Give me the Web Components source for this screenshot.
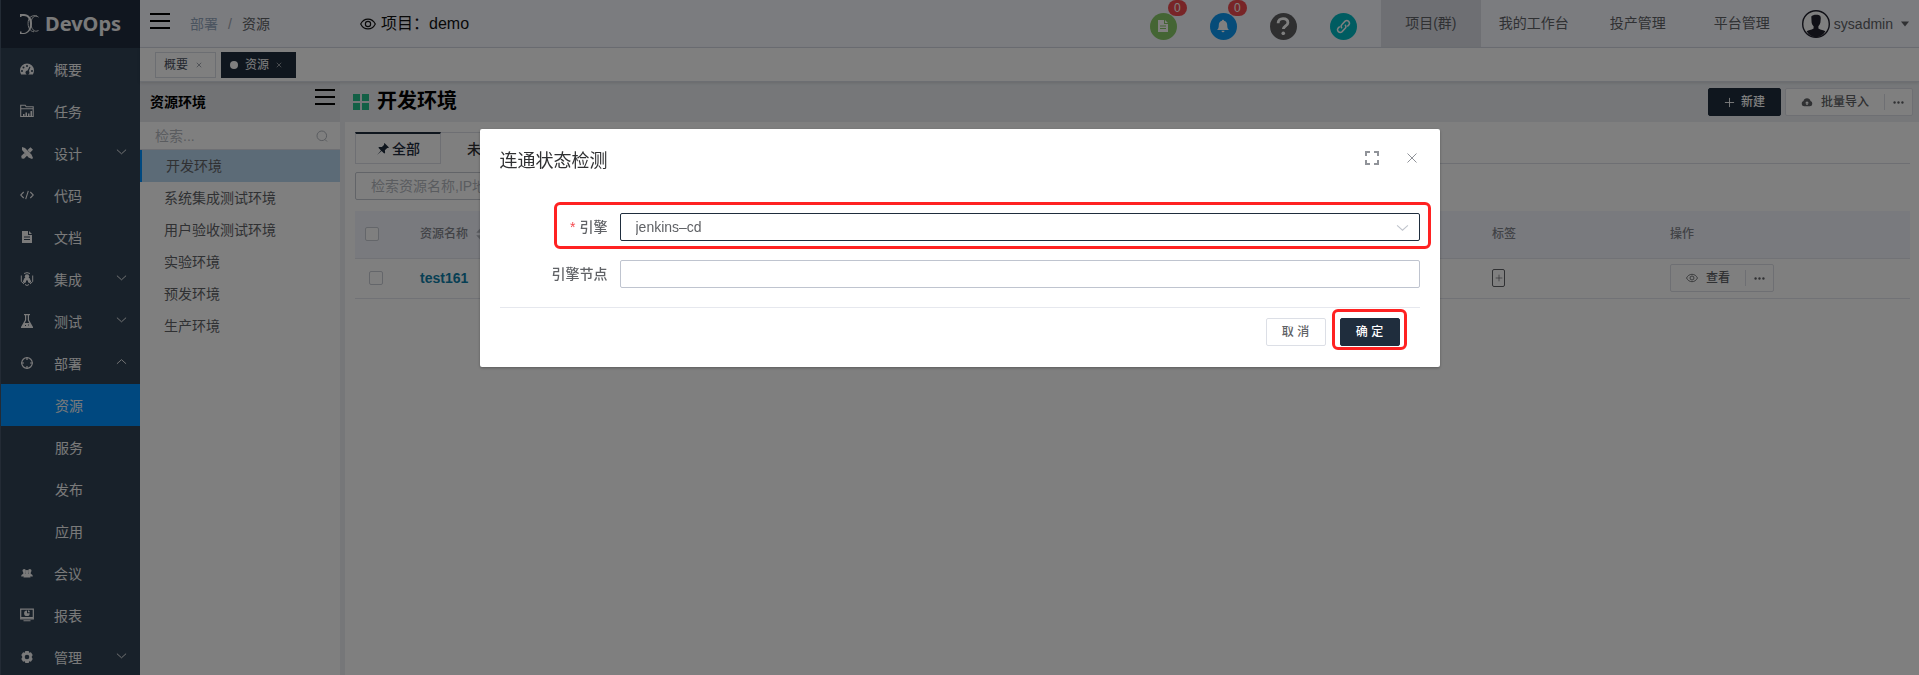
<!DOCTYPE html>
<html lang="zh-CN">
<head>
<meta charset="utf-8">
<title>DevOps</title>
<style>
  body {
    margin: 0;
    height: 100vh;
    overflow: hidden;
    background: #fff;
    color: #606266;
    font-family: "Liberation Sans", "Noto Sans CJK SC", sans-serif;
    font-size: 14px;
    line-height: 20px;
  }
</style>
</head>
<body>
<app-shell>
  <side-menu slot="side"></side-menu>
  <top-bar slot="top"></top-bar>
  <tag-bar slot="tags"></tag-bar>
  <env-panel slot="panel"></env-panel>
  <resource-page></resource-page>
</app-shell>

<modal-dialog heading="连通状态检测">
  <form-row name="engine" label="引擎" type="select" value="jenkins–cd" required marked></form-row>
  <form-row name="node" label="引擎节点" type="text"></form-row>
  <ui-button slot="footer">取 消</ui-button>
  <ui-button slot="footer" kind="primary" marked>确 定</ui-button>
</modal-dialog>

<script>
const ICONS = {
  menu: '<path d="M0 1.5h20M0 8.500h20M0 15.500h20" transform="translate(0 -.5)" stroke="currentColor" stroke-width="2.200" fill="none"/>',
  dash: '<path fill-rule="evenodd" d="M7 1.500A7 7 0 0 0 0 8.500c0 1.400.4 2.700 1.100 4h11.800c.7-1.300 1.100-2.600 1.100-4a7 7 0 0 0-7-7zM7 3a1 1 0 1 1 0 2 1 1 0 0 1 0-2zM3.500 4.500a1 1 0 1 1 0 2 1 1 0 0 1 0-2zM2 8a1 1 0 1 1 0 2 1 1 0 0 1 0-2zm10 0a1 1 0 1 1 0 2 1 1 0 0 1 0-2zM9.500 4.700l1 .4-1.700 4A2 2 0 1 1 7.600 8.600z"/>',
  task: '<path d="M.7 12.500V1.200h4.500l1 1.500h7v9.800zM.7 4.700h12.600" fill="none" stroke="currentColor" stroke-width="1.100"/><path d="M3 10h1.500v2H3zM5.500 8.500H7v3.500H5.500zM8 9.500h1.500V12H8zM10.500 7H12v5h-1.500z"/>',
  design: '<path d="M2 1l3 1 6.500 6.500 1.500 3.500-1 1-3.500-1.500L2 4zM1.200 10L4.300 7l2.700 2.700-3 3.100-2.300-.4zM7.500 4l3-2.800 2.500 2.500-3 3z"/>',
  code: '<path d="M3.700 4L.7 7l3 3M10.300 4l3 3-3 3M8.300 2.800l-2.600 8.400" fill="none" stroke="currentColor" stroke-width="1.100"/>',
  doc: '<path fill-rule="evenodd" d="M2 1h6v4h4v8H2zM9 1l3 3H9zM4 6.500v1h6v-1zM4 9v1h6V9z"/>',
  jenkins: '<path d="M4 1.500a6 6 0 0 1 6 0M1.300 3.500v6L4 12M12.700 3.500v6L10 12M5 12.500l2 1 2-1" fill="none" stroke="currentColor"/><circle cx="7" cy="4.500" r="2.200"/><path fill-rule="evenodd" d="M2.800 9.500L4.500 6h5l1.700 3.500-1.200 1.700-2-1V8.500H6v1.700l-2 1z"/>',
  flask: '<path fill-rule="evenodd" d="M4 0h6v1.200H9V6l4 7v1H1v-1l4-7V1.200H4zM6.200 1.200v5L4.800 9h4.400L7.800 6.200v-5zM5 11v1h1v-1zm3-.500v1h1v-1z"/>',
  deploy: '<circle cx="7" cy="7" r="5.300" fill="none" stroke="currentColor" stroke-width="1.200"/><path d="M7 1v3M7 10v3M1 7h3M10 7h3" stroke="currentColor" stroke-width="1.200"/>',
  people: '<circle cx="4.200" cy="4.800" r="1.700"/><circle cx="9.800" cy="4.800" r="1.700"/><path d="M1.200 10.500c0-1.600.8-2.200 2-2.600V6h2v2h3.600V6h2v1.900c1.200.4 2 1 2 2.600z"/><path d="M3.500 11.500c0-1.700 1-2.400 2.300-2.800C4.600 6.500 5.300 4 7 4s2.400 2.500 1.200 4.700c1.300.4 2.300 1.100 2.300 2.800z"/>',
  report: '<path d="M.7 1.200h12.600v9.600H.7z" fill="none" stroke="currentColor" stroke-width="1.200"/><path d="M1 9h12v1.500H1zM3.500 12.200h7v1h-7zM7 2.500v2.700h2.700A2.800 2.800 0 1 1 7 2.500zM8 2.200a2.300 2.300 0 0 1 2 2H8z"/>',
  gear: '<path fill-rule="evenodd" d="M5.300 1h3.400l.5 1.700 1.700-.4L12.700 5l-1.100 2 1.100 2-1.800 2.700-1.700-.4-.5 1.700H5.300l-.5-1.700-1.700.4L1.300 9l1.100-2-1.100-2 1.800-2.700 1.700.4zM7 4.700a2.300 2.300 0 1 0 0 4.600 2.300 2.300 0 0 0 0-4.600z"/>',
  down: '<path d="M1 4l5 4.500L11 4" fill="none" stroke="currentColor"/>',
  up: '<path d="M1 8.500L6 4l5 4.500" fill="none" stroke="currentColor"/>',
  eye: '<path d="M.6 7C2 4.200 4.300 2.700 7 2.700S12 4.200 13.400 7C12 9.800 9.700 11.300 7 11.300S2 9.800.6 7z" fill="none" stroke="currentColor"/><circle cx="7" cy="7" r="2.300" fill="none" stroke="currentColor"/>',
  search: '<circle cx="5.800" cy="5.800" r="4.800" fill="none" stroke="currentColor"/><path d="M9 9.500l2 2" stroke="currentColor"/>',
  close: '<path d="M1.500 1.500l9 9M10.500 1.500l-9 9" fill="none" stroke="currentColor"/>',
  full: '<path d="M1 5V1h4M9 1h4v4M13 9v4H9M5 13H1V9" fill="none" stroke="currentColor" stroke-width="2"/>',
  plus: '<path d="M6 1v10M1 6h10" stroke="currentColor"/>',
  cloud: '<path fill-rule="evenodd" d="M3.700 12a3.200 3.200 0 0 1-.8-6.200 4.200 4.200 0 0 1 8.200 0A3.200 3.200 0 0 1 10.300 12zM7 6L4.600 8.500h1.600v2h1.600v-2h1.600z"/>',
  dots: '<circle cx="2" cy="7" r="1.500"/><circle cx="7" cy="7" r="1.500"/><circle cx="12" cy="7" r="1.500"/>',
  pin: '<path d="M8.500 1L13 5.500l-1 .6-.8-.2-2.300 2.400.2 2.700-.9.600-2.600-2.600L1 13l4-4.600-2.600-2.600.6-.9 2.900.2L8.200 2.800 7.900 2z"/>',
  grid: '<path d="M0 0h7v7H0zM9 0h7v7H9zM0 9h7v7H0zM9 9h7v7H9z"/>',
  caret: '<path d="M0 3h10L5 9z"/>',
  sort: '<path d="M0 5.500h10L5 0zM0 8.500h10L5 14z"/>',
  bell: '<path d="M7 .8c.6 0 1 .4 1 1 2 .5 3.200 2 3.200 4.200 0 2.700.6 4 1.800 5H1c1.200-1 1.800-2.300 1.800-5C2.800 3.800 4 2.300 6 1.800c0-.6.4-1 1-1zM5.500 11.700h3a1.500 1.500 0 0 1-3 0z"/>',
  help: '<path d="M3.200 4.800C3.200 2.500 4.800 1.200 7 1.200s3.800 1.200 3.800 3.200c0 2.400-3.500 2.600-3.500 5" fill="none" stroke="currentColor" stroke-width="2.200"/><circle cx="7.200" cy="12.700" r="1.400"/>',
  link: '<path d="M5.600 8.600a2.500 2.500 0 0 1 0-3.500L8.500 2a2.500 2.500 0 0 1 3.500 3.500L10.500 7M8.400 5.400a2.500 2.500 0 0 1 0 3.500L5.500 12A2.500 2.500 0 0 1 2 8.500L3.500 7" fill="none" stroke="currentColor" stroke-width="1.400"/>',
  logo: '<path d="M0 0h4c4.500 0 8 4 8 9.500S8.500 19.500 4 20H0v-2.500h1.500V19H4c3.500-.5 6-4 6-9S7.500 2 4 2H1.500v1H0z"/><path d="M18.500 3.200C15 .2 9 1.500 8.200 7.500 7.500 13 10 17.500 14 17.800M18.500 16.500C14 19 11 14.500 11 9.500 11 5 13 1.700 17 2" fill="none" stroke="currentColor" stroke-width=".9"/>',
  user: '<circle cx="14" cy="14" r="13.300" fill="#fff" stroke="currentColor" stroke-width="1.400"/><path d="M9.300 6.500C10.500 4.500 16.500 4 18.300 6l.5 2-.4 4.500c-.5 2-1.200 3-2 3.700v2.300c2.500 1.500 5 1.500 7 2.700A13 13 0 0 1 14 27.500 13 13 0 0 1 4.600 21.200c2-1.200 4.500-1.200 7-2.700v-2.300c-.9-.8-1.700-2-2-3.700z"/>'
};
const VIEW = { menu: '0 0 20 16', down: '0 0 12 12', up: '0 0 12 12', search: '0 0 12 12', close: '0 0 12 12', plus: '0 0 12 12', grid: '0 0 16 16', caret: '0 0 10 12', sort: '0 0 10 14', logo: '0 0 19 20', user: '0 0 28 28' };

class Base extends HTMLElement {
  connectedCallback() {
    if (this.shadowRoot) return;
    this.attachShadow({ mode: 'open' }).innerHTML = this.render();
  }
}

// <ui-icon name="eye" style="--w: 14px">
class UiIcon extends Base {
  render() {
    const name = this.getAttribute('name');
    return `
      <style>
        :host { display: inline-flex; flex: none; width: var(--w, 14px); height: var(--h, var(--w, 14px)); }
        svg { width: 100%; height: 100%; fill: currentColor; }
      </style>
      <svg viewBox="${VIEW[name] || '0 0 14 14'}" aria-hidden="true">${ICONS[name]}</svg>
    `;
  }
}

class UiButton extends Base {
  render() {
    return `
      <style>
        :host { display: block; position: relative; }
        button {
          display: flex;
          align-items: center;
          justify-content: center;
          gap: 6px;
          box-sizing: border-box;
          min-width: 60px;
          height: 28px;
          padding: 0 15px;
          border: 1px solid #dcdfe6;
          border-radius: 2px;
          background: #fff;
          color: #606266;
          font: 500 12px/16px "Liberation Sans", "Noto Sans CJK SC", sans-serif;
          cursor: pointer;
        }
        :host([kind="primary"]) button { background: #1f2d3d; border-color: #1f2d3d; color: #fff; }
        :host([marked])::after {
          content: "";
          position: absolute;
          inset: -9px -7px -4px -8px;
          border: 3px solid #ff2222;
          border-radius: 6px;
          pointer-events: none;
        }
      </style>
      <button type="button"><slot></slot></button>
    `;
  }
}

// button with a "more" part at its right end
class SplitButton extends Base {
  render() {
    return `
      <style>
        :host {
          display: inline-flex;
          align-items: center;
          box-sizing: border-box;
          height: 28px;
          border: 1px solid #dcdfe6;
          border-radius: 2px;
          background: #fff;
          color: #606266;
        }
        button {
          display: flex;
          align-items: center;
          gap: 8px;
          height: 16px;
          padding: 0 15px;
          border: 0;
          background: none;
          color: inherit;
          font: 500 12px/16px "Liberation Sans", "Noto Sans CJK SC", sans-serif;
        }
        .more { border-left: 1px solid #dcdfe6; padding: 0 8px; }
      </style>
      <button type="button"><ui-icon name="${this.getAttribute('icon')}" style="--w: 12px"></ui-icon><slot></slot></button>
      <button type="button" class="more" aria-label="更多"><ui-icon name="dots" style="--w: 11px"></ui-icon></button>
    `;
  }
}

class AppShell extends Base {
  render() {
    return `
      <style>
        :host { display: grid; grid-template-columns: 140px minmax(0, 1fr); height: 100vh; }
        .main { display: flex; flex-direction: column; min-width: 0; }
        .body { display: flex; flex: 1; min-height: 0; }
      </style>
      <slot name="side"></slot>
      <div class="main">
        <slot name="top"></slot>
        <slot name="tags"></slot>
        <div class="body">
          <slot name="panel"></slot>
          <slot></slot>
        </div>
      </div>
    `;
  }
}

class SideMenu extends Base {
  render() {
    const items = [
      ['概要', 'dash'], ['任务', 'task'], ['设计', 'design', 'down'], ['代码', 'code'],
      ['文档', 'doc'], ['集成', 'jenkins', 'down'], ['测试', 'flask', 'down'], ['部署', 'deploy', 'up'],
      ['资源', '', '', 'sub active'], ['服务', '', '', 'sub'], ['发布', '', '', 'sub'], ['应用', '', '', 'sub'],
      ['会议', 'people'], ['报表', 'report'], ['管理', 'gear', 'down']
    ];
    return `
      <style>
        :host { display: block; overflow: hidden; box-sizing: border-box; border-left: 1px solid #46566a; background: #304254; color: #f4f4f5; }
        .logo {
          display: flex;
          align-items: center;
          gap: 6px;
          height: 48px;
          padding-left: 19px;
          background: #202d3e;
          font: 700 20px/28px "Noto Sans", sans-serif;
        }
        a {
          display: flex;
          align-items: center;
          height: 42px;
          padding: 0 13px 0 19px;
          color: inherit;
          text-decoration: none;
        }
        span { flex: 1; padding: 2px 0 0 20px; }
        .arrow { padding-bottom: 3px; }
        .sub { padding-left: 34px; }
        .active { background: #0090ff; }
      </style>
      <div class="logo"><ui-icon name="logo" style="--w: 19px; --h: 20px"></ui-icon>DevOps</div>
      <nav>
        ${items.map(([text, icon, arrow, cls]) => `
          <a href="#" class="${cls || ''}">
            ${icon ? `<ui-icon name="${icon}"></ui-icon>` : ''}
            <span>${text}</span>
            ${arrow ? `<ui-icon class="arrow" name="${arrow}" style="--w: 11px"></ui-icon>` : ''}
          </a>`).join('')}
      </nav>
    `;
  }
}

class TopBar extends Base {
  render() {
    return `
      <style>
        :host {
          display: flex;
          align-items: center;
          box-sizing: border-box;
          height: 48px;
          padding: 0 10px;
          background: #f6f8ff;
          border-bottom: 1px solid #d8dce5;
        }
        a { color: inherit; text-decoration: none; }
        .menu { display: flex; padding: 0 0 6px; border: 0; background: none; color: #000; }
        .crumbs { display: flex; gap: 10px; padding-left: 20px; }
        .crumbs a { color: #97a8be; }
        .crumbs i { color: #a0a6b0; font-style: normal; width: 4px; }
        .project { display: flex; align-items: center; gap: 5px; padding-left: 90px; color: #111; font-size: 16px; flex: 1; }
        .tools { display: flex; gap: 33px; padding-right: 24px; }
        .tool {
          position: relative;
          display: flex;
          align-items: center;
          justify-content: center;
          width: 27px;
          height: 27px;
          margin-top: 5px;
          border-radius: 50%;
          color: #fff;
        }
        .badge {
          position: absolute;
          top: -13px;
          left: 18px;
          width: 19px;
          border-radius: 8px;
          background: #f04a4f;
          font-size: 12px;
          line-height: 16px;
          text-align: center;
        }
        nav { display: flex; line-height: 47px; }
        nav a { padding: 0 24px; }
        nav .on { background: #dcdfe6; width: 100px; padding: 0; text-align: center; }
        nav .wide { padding: 0 17px 0 18px; }
        .user { display: flex; align-items: center; gap: 4px; padding-left: 8px; }
        .user ui-icon:last-child { margin-left: 4px; }
      </style>
      <button class="menu" type="button" aria-label="菜单"><ui-icon name="menu" style="--w: 20px; --h: 16px"></ui-icon></button>
      <div class="crumbs"><a href="#">部署</a><i>/</i><span>资源</span></div>
      <div class="project"><ui-icon name="eye" style="--w: 16px"></ui-icon><span>项目：demo</span></div>
      <div class="tools">
        <a href="#" class="tool" style="background: #89cb68" aria-label="文档"><ui-icon name="doc"></ui-icon><span class="badge">0</span></a>
        <a href="#" class="tool" style="background: #0c99f2" aria-label="通知"><ui-icon name="bell"></ui-icon><span class="badge">0</span></a>
        <a href="#" class="tool" style="background: #5e5f61" aria-label="帮助"><ui-icon name="help" style="--w: 18px"></ui-icon></a>
        <a href="#" class="tool" style="background: #00b9c2" aria-label="链接"><ui-icon name="link" style="--w: 15px"></ui-icon></a>
      </div>
      <nav>
        <a href="#" class="on">项目(群)</a>
        <a href="#" class="wide">我的工作台</a>
        <a href="#">投产管理</a>
        <a href="#">平台管理</a>
      </nav>
      <a href="#" class="user"><ui-icon name="user" style="--w: 28px; color: #20202c"></ui-icon>sysadmin<ui-icon name="caret" style="--w: 8px; --h: 10px"></ui-icon></a>
    `;
  }
}

class TagBar extends Base {
  render() {
    return `
      <style>
        :host {
          display: flex;
          align-items: center;
          gap: 5px;
          box-sizing: border-box;
          height: 34px;
          padding-left: 15px;
          background: #fff;
          border-bottom: 1px solid #d8dce5;
          box-shadow: 0 1px 3px rgba(0, 0, 0, .12);
          position: relative;
        }
        a {
          display: flex;
          align-items: center;
          gap: 8px;
          box-sizing: border-box;
          height: 26px;
          padding: 0 13px 0 8px;
          border: 1px solid #d8dce5;
          color: #495060;
          font-size: 12px;
          text-decoration: none;
        }
        .on { background: #1f2d3d; border-color: #1f2d3d; color: #fff; gap: 7px; }
        .on::before { content: ""; width: 8px; height: 8px; border-radius: 50%; background: #fff; }
      </style>
      <a href="#">概要<ui-icon name="close" style="--w: 6px"></ui-icon></a>
      <a href="#" class="on">资源<ui-icon name="close" style="--w: 6px"></ui-icon></a>
    `;
  }
}

class EnvPanel extends Base {
  render() {
    const envs = ['开发环境', '系统集成测试环境', '用户验收测试环境', '实验环境', '预发环境', '生产环境'];
    return `
      <style>
        :host { display: block; flex: none; width: 200px; background: #fff; }
        header {
          display: flex;
          align-items: center;
          justify-content: space-between;
          height: 40px;
          padding: 0 5px 0 10px;
          background: #e4e6eb;
          color: #000;
          font-weight: 700;
        }
        header ui-icon { padding-bottom: 10px; }
        .search {
          display: flex;
          align-items: center;
          height: 27px;
          padding: 0 12px 0 15px;
          border-bottom: 1px solid #dcdfe6;
          color: #b4b8bf;
        }
        input { flex: 1; min-width: 0; padding: 0; border: 0; outline: 0; background: none; font: inherit; }
        input::placeholder { color: #b4b8bf; opacity: 1; }
        a { display: block; line-height: 32px; padding-left: 24px; color: inherit; text-decoration: none; }
        .on { background: #b9d6ee; border-left: 2px solid #0090ff; }
      </style>
      <header>资源环境<ui-icon name="menu" style="--w: 20px; --h: 16px"></ui-icon></header>
      <div class="search"><input type="text" placeholder="检索..." aria-label="检索"><ui-icon name="search" style="--w: 12px"></ui-icon></div>
      <nav>${envs.map((e, i) => `<a href="#" class="${i ? '' : 'on'}">${e}</a>`).join('')}</nav>
    `;
  }
}

class ResourcePage extends Base {
  render() {
    return `
      <style>
        :host { display: flex; flex-direction: column; flex: 1; min-width: 0; background: #eceff3; }
        header { display: flex; align-items: center; gap: 4px; height: 40px; padding: 0 6px 0 13px; }
        h1 { flex: 1; margin: 0; padding: 0 0 2px 4px; color: #000; font-size: 20px; line-height: 30px; }
        .card { flex: 1; margin-left: 5px; padding: 10px 9px 0 10px; background: #fff; }
        .tabs { display: flex; height: 32px; }
        .tabs button {
          display: flex;
          align-items: center;
          gap: 2px;
          padding: 0 20px;
          border: 0;
          border-top: 1px solid #dcdfe6;
          background: none;
          color: #303133;
          font: 500 14px/20px "Liberation Sans", "Noto Sans CJK SC", sans-serif;
        }
        .tabs .on { border: 1px solid #dcdfe6; border-top: 2px solid #1f2d3d; color: #1f2d3d; width: 86px; }
        .tabs .other { width: 120px; padding: 0 26px; }
        .tabs::after { content: ""; flex: 1; border-bottom: 1px solid #dcdfe6; }
        input[type="text"] {
          display: block;
          box-sizing: border-box;
          width: 300px;
          height: 28px;
          margin: 8px 0 11px;
          padding: 0 15px;
          border: 1px solid #c4c8d0;
          border-radius: 2px;
          font: inherit;
        }
        input::placeholder { color: #b4b8bf; opacity: 1; }
        input[type="checkbox"] {
          appearance: none;
          display: block;
          box-sizing: border-box;
          width: 14px;
          height: 14px;
          margin: 0;
          border: 1px solid #c8ccd4;
          border-radius: 2px;
          background: #fff;
        }
        table { width: 100%; table-layout: fixed; border-collapse: collapse; font-size: 12px; text-align: left; }
        th, td { box-sizing: border-box; padding: 0 10px; border-bottom: 1px solid #e2e5ec; }
        th { height: 47px; background: #f2f4fc; color: #82858c; font-weight: 500; }
        td { height: 40px; }
        td:first-child { padding-left: 14px; }
        .pick { width: 55px; }
        .tag { width: 178px; }
        .ops { width: 250px; }
        .sort { display: flex; align-items: center; gap: 8px; }
        .sort ui-icon { color: #b4b8c0; }
        td a { color: #0f7fa8; font-size: 14px; font-weight: 700; text-decoration: none; }
        .add {
          display: flex;
          align-items: center;
          justify-content: center;
          width: 13px;
          height: 18px;
          padding: 0;
          border: 1px solid #606266;
          border-radius: 2px;
          background: #fff;
          color: #606266;
        }
        td split-button { vertical-align: middle; }
      </style>
      <header>
        <ui-icon name="grid" style="--w: 16px; color: #27c18c"></ui-icon>
        <h1>开发环境</h1>
        <ui-button kind="primary"><ui-icon name="plus" style="--w: 11px"></ui-icon>新建</ui-button>
        <split-button icon="cloud">批量导入</split-button>
      </header>
      <div class="card">
        <div class="tabs">
          <button type="button" class="on"><ui-icon name="pin"></ui-icon>全部</button>
          <button type="button" class="other">未</button>
        </div>
        <input type="text" placeholder="检索资源名称,IP地址" aria-label="检索资源">
        <table>
          <thead>
            <tr>
              <th class="pick"><input type="checkbox" aria-label="全选"></th>
              <th><div class="sort">资源名称<ui-icon name="sort" style="--w: 9px; --h: 12px"></ui-icon></div></th>
              <th class="tag">标签</th>
              <th class="ops">操作</th>
            </tr>
          </thead>
          <tbody>
            <tr>
              <td><input type="checkbox" aria-label="选择 test161"></td>
              <td><a href="#">test161</a></td>
              <td><button type="button" class="add" aria-label="添加标签"><ui-icon name="plus" style="--w: 8px"></ui-icon></button></td>
              <td><split-button icon="eye">查看</split-button></td>
            </tr>
          </tbody>
        </table>
      </div>
    `;
  }
}

class FormRow extends Base {
  render() {
    const id = this.getAttribute('name');
    const control = this.getAttribute('type') === 'select'
      ? `<select id="${id}"><option>${this.getAttribute('value')}</option></select><ui-icon name="down" style="--w: 13px"></ui-icon>`
      : `<input id="${id}" type="text">`;
    return `
      <style>
        :host { display: grid; grid-template-columns: 120px minmax(0, 1fr); align-items: center; position: relative; }
        label { padding-right: 12px; text-align: right; font-weight: 500; }
        :host([required]) label::before { content: "*"; margin-right: 4px; color: #f5484d; }
        .control { display: grid; align-items: center; }
        select, input {
          grid-area: 1 / 1;
          appearance: none;
          box-sizing: border-box;
          width: 100%;
          height: 28px;
          margin: 0;
          padding: 0 15px;
          border: 1px solid #bfc4cf;
          border-radius: 2px;
          outline: 0;
          background: #fff;
          color: #606266;
          font: inherit;
        }
        select { border-color: #1f2d3d; }
        ui-icon { grid-area: 1 / 1; justify-self: end; margin-right: 11px; color: #c0c4cc; pointer-events: none; }
        :host([marked])::after {
          content: "";
          position: absolute;
          inset: -11px -11px -8px 54px;
          border: 3px solid #ff2222;
          border-radius: 6px;
          pointer-events: none;
        }
      </style>
      <label for="${id}">${this.getAttribute('label')}</label>
      <div class="control">${control}</div>
    `;
  }
}

class ModalDialog extends Base {
  render() {
    return `
      <style>
        :host {
          display: flex;
          justify-content: center;
          align-items: flex-start;
          position: fixed;
          inset: 0;
          padding-top: 129px;
          background: rgba(0, 0, 0, .5);
        }
        section {
          box-sizing: border-box;
          width: 960px;
          max-width: 100%;
          padding: 20px 20px 21px;
          border-radius: 2px;
          background: #fff;
          box-shadow: 0 1px 3px rgba(0, 0, 0, .3);
        }
        header { display: flex; gap: 27px; height: 64px; }
        h2 { flex: 1; margin: 0; color: #303133; font-size: 18px; font-weight: 400; line-height: 24px; }
        header button { display: flex; align-items: center; height: 18px; padding: 0; border: 0; background: none; color: #909399; }
        header button:last-child { margin-right: 2px; }
        form { display: flex; flex-direction: column; gap: 19px; }
        footer {
          display: flex;
          justify-content: flex-end;
          gap: 14px;
          margin-top: 19px;
          padding: 10px 20px 0 0;
          border-top: 1px solid #e6e8ee;
        }
      </style>
      <section role="dialog" aria-modal="true" aria-labelledby="title">
        <header>
          <h2 id="title">${this.getAttribute('heading')}</h2>
          <button type="button" aria-label="全屏"><ui-icon name="full" style="--w: 14px"></ui-icon></button>
          <button type="button" aria-label="关闭"><ui-icon name="close" style="--w: 12px"></ui-icon></button>
        </header>
        <form><slot></slot></form>
        <footer><slot name="footer"></slot></footer>
      </section>
    `;
  }
}

customElements.define('ui-icon', UiIcon);
customElements.define('ui-button', UiButton);
customElements.define('split-button', SplitButton);
customElements.define('app-shell', AppShell);
customElements.define('side-menu', SideMenu);
customElements.define('top-bar', TopBar);
customElements.define('tag-bar', TagBar);
customElements.define('env-panel', EnvPanel);
customElements.define('resource-page', ResourcePage);
customElements.define('form-row', FormRow);
customElements.define('modal-dialog', ModalDialog);
</script>
</body>
</html>
